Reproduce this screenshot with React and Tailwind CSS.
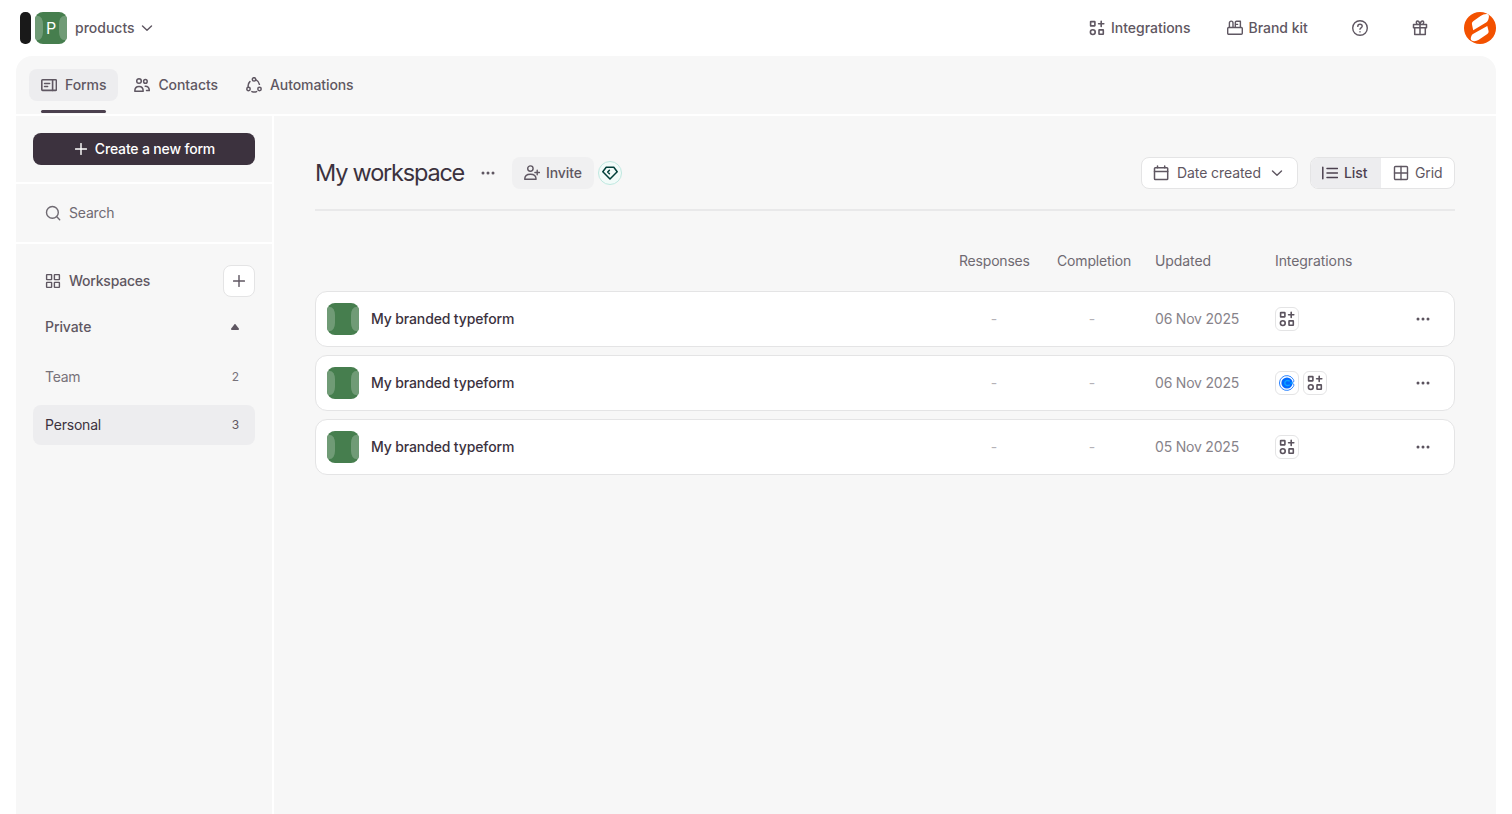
import React from 'react';

const Svg = ({ size = 16, className = '', sw = 1.4, children }) => (
  <svg
    width={size}
    height={size}
    viewBox="0 0 16 16"
    fill="none"
    stroke="currentColor"
    strokeWidth={sw}
    strokeLinecap="round"
    strokeLinejoin="round"
    className={`shrink-0 ${className}`}
  >
    {children}
  </svg>
);

const FormsIcon = () => (
  <Svg sw={1.6}>
    <rect x="0.8" y="2.8" width="14.6" height="10.6" rx="0.8" />
    <path d="M11.6 2.8v10.6M3.6 6.5h5M3.6 9.5h3" />
  </Svg>
);

const ContactsIcon = () => (
  <Svg sw={1.5}>
    <circle cx="5" cy="4" r="2.3" />
    <path d="M.8 14.2c0-3 1.7-4.6 4.2-4.6s4.2 1.6 4.2 4.6z" />
    <circle cx="11.4" cy="4.4" r="1.8" />
    <path d="M11.2 9.2c2.5-.2 4.1 1.5 4.1 4.4h-2.8" />
  </Svg>
);

const AutomationsIcon = () => (
  <Svg sw={1.5}>
    <circle cx="8" cy="2.4" r="1.7" />
    <circle cx="2.5" cy="12" r="1.7" />
    <circle cx="13.5" cy="12" r="1.7" />
    <path d="M10 2.8c1.8.9 3 2.5 3.4 4.5M3.9 4.6C2.5 5.9 1.9 7.7 2.2 9.9M5.9 14.6c1.7.7 3.2.7 4.7 0" />
  </Svg>
);

const AppsIcon = () => (
  <Svg sw={1.6}>
    <rect x="1.6" y="1.6" width="4.3" height="4.3" rx="0.3" />
    <path d="M12.2 1.2v5.2M9.6 3.8h5.2" />
    <circle cx="3.8" cy="12.1" r="2.4" />
    <rect x="10" y="9.9" width="4.3" height="4.3" rx="0.3" />
  </Svg>
);

const BrandKitIcon = () => (
  <Svg>
    <rect x="0.7" y="7.5" width="14.6" height="6.7" rx="1" />
    <path d="M2.400 7.300V3c0-1 .8-1.900 1.800-1.900S6 2 6 3v4.300M8.300 7.300V2.500c0-.8.5-1.300 1.300-1.300h3.800v6.100M8.600 4.400h2" />
  </Svg>
);

const HelpIcon = () => (
  <Svg>
    <circle cx="8" cy="8" r="7.3" />
    <path d="M5.8 6.4c0-1.3 1-2.1 2.2-2.1s2.2.8 2.2 2c0 1.5-2.2 1.6-2.2 3M8 11.8v.1" />
  </Svg>
);

const GiftIcon = () => (
  <Svg sw={1.5}>
    <path d="M1.5 4.6h13v3.2h-13zM2.7 7.8h10.6v6.6H2.7zM8 4.6v9.8M8 4.4C7.6 2 6.6 1 5.4 1c-1.4 0-1.5 2.5 0 3.400M8 4.400C8.400 2 9.400 1 10.600 1c1.400 0 1.500 2.500 0 3.400" />
  </Svg>
);

const ChevronIcon = () => (
  <Svg size={12} sw={1.9}>
    <path d="M2 5.200 8 11l6-5.800" />
  </Svg>
);

const PlusIcon = ({ size = 12 }) => (
  <Svg size={size} sw={1.9}>
    <path d="M8 .8v14.4M.8 8h14.4" />
  </Svg>
);

const SearchIcon = () => (
  <Svg>
    <circle cx="7.4" cy="7.4" r="5.9" />
    <path d="m11.800 11.800 2.900 2.900" />
  </Svg>
);

const WorkspacesIcon = () => (
  <Svg>
    <rect x="1.6" y="1.6" width="5" height="5" rx="0.4" />
    <rect x="9.4" y="1.6" width="5" height="5" rx="0.4" />
    <rect x="1.6" y="9.4" width="5" height="5" rx="0.4" />
    <rect x="9.4" y="9.4" width="5" height="5" rx="0.4" />
  </Svg>
);

const InviteIcon = () => (
  <Svg>
    <circle cx="6.4" cy="3.6" r="2.7" />
    <path d="M.7 14.3c0-3 2.200-5 5.700-5s5.700 2 5.700 5zM13.200 5.200v4.600M10.900 7.500h4.600" />
  </Svg>
);

const GemIcon = () => (
  <Svg sw={1.5} className="text-[#02403a]">
    <path d="M4.2 2.3h7.600L15.200 6.700 8 14 .8 6.700z" />
    <path d="M7.400 5.200 5.700 7l1.700 1.700" />
  </Svg>
);

const CalendarIcon = () => (
  <Svg sw={1.5}>
    <rect x="1.5" y="2.8" width="13.2" height="11.7" rx="0.8" />
    <path d="M1.5 6.5h13.2M4.5 1v1.7M11.7 1v1.7" />
  </Svg>
);

const ListIcon = () => (
  <Svg sw={1.5}>
    <path d="M.8 2.2v11.6M5 3.5h10.5M5 8h10.5M5 12.5h10.5" />
  </Svg>
);

const GridIcon = () => (
  <Svg>
    <rect x="1.5" y="1.5" width="13" height="13" rx="1" />
    <path d="M8 1.5v13M1.5 8h13" />
  </Svg>
);

const DotsIcon = () => (
  <svg width="14" height="4" viewBox="0 0 14 4" fill="currentColor" className="shrink-0">
    <circle cx="2" cy="2" r="1.5" />
    <circle cx="7" cy="2" r="1.5" />
    <circle cx="12" cy="2" r="1.5" />
  </svg>
);

const CalendlyIcon = () => (
  <svg width="16" height="16" viewBox="0 0 16 16" fill="none" className="shrink-0">
    <circle cx="8" cy="8" r="5.6" fill="#0069ff" />
    <path d="M14.2 4.2A7.400 7.400 0 1 0 14.200 11.800" stroke="#1677ff" strokeWidth="0.9" />
    <path d="M14.200 4.200c1 1.500.9 2.600-.7 3.800 1.600 1.200 1.700 2.300.7 3.800" stroke="#1677ff" strokeWidth="0.9" />
    <path d="M10.800 6.200C8.700 4.700 5.800 5.600 5.800 8s2.900 3.300 5 1.800" stroke="#0aa5ff" strokeWidth="1.400" />
    <path d="M11.500 8h2" stroke="#0ab4ff" strokeWidth="1.200" />
  </svg>
);

const BrandLogo = () => (
  <svg width="32" height="32" viewBox="0 0 32 32" className="shrink-0">
    <circle cx="16" cy="16" r="16" fill="#f35100" />
    <path
      d="M8 12.400c-.3-1.600.2-2.500 1.500-3.400l7-4.900c2.300-1.500 5-2.400 7.400-1.900 1.300.8 1.200 2.300.7 4.300-.4 1.700-1 3.200-2.500 4.100L9.200 18.200z"
      fill="#fff"
    />
    <path
      d="m23.300 14 1.200 4.800c.3 1.300 0 2.200-1.200 3.100l-8.500 5.900c-2.200 1.500-5.200 2-7.100.8-1.300-1-1.100-3-.2-4.900.4-.9 1-1.500 1.900-2z"
      fill="#fff"
    />
  </svg>
);

// green tile used for both the account and every form
const Tile = ({ children }) => (
  <div className="relative w-8 h-8 shrink-0 rounded-lg bg-[#467e4e] overflow-hidden flex items-center justify-center text-white">
    <span className="absolute left-0 top-1 w-2 h-6 rounded-r-[5px_8px] bg-[#709b76]" />
    <span className="absolute right-0 top-1 w-2 h-6 rounded-l-[5px_8px] bg-[#709b76]" />
    <span className="relative text-base leading-none">{children}</span>
  </div>
);

const IconChip = ({ children }) => (
  <span className="w-6 h-6 rounded-md border border-[#e4e4e5] bg-white flex items-center justify-center">
    {children}
  </span>
);

const tabs = [
  { label: 'Forms', icon: FormsIcon, active: true },
  { label: 'Contacts', icon: ContactsIcon },
  { label: 'Automations', icon: AutomationsIcon },
];

const forms = [
  { name: 'My branded typeform', updated: '06 Nov 2025', calendly: false },
  { name: 'My branded typeform', updated: '06 Nov 2025', calendly: true },
  { name: 'My branded typeform', updated: '05 Nov 2025', calendly: false },
];

const Header = () => (
  <header className="h-14 shrink-0 flex items-center justify-between pl-5 pr-4">
    <div className="flex items-center">
      <div className="w-[11px] h-8 rounded-[5px] bg-[#191919] mr-1" />
      <Tile>P</Tile>
      <span className="ml-2 mr-1.5 tracking-[0px] font-[450]">products</span>
      <ChevronIcon />
    </div>
    <div className="flex items-center font-[450]">
      <div className="flex items-center gap-1.5 w-[137.5px]">
        <AppsIcon />
        <span className="tracking-[-0.02px]">Integrations</span>
      </div>
      <div className="flex items-center gap-1.5 w-[125.5px]">
        <BrandKitIcon />
        <span className="tracking-[-0.02px]">Brand kit</span>
      </div>
      <div className="w-[60px] flex"><HelpIcon /></div>
      <div className="w-[52px] flex"><GiftIcon /></div>
      <BrandLogo />
    </div>
  </header>
);

const Sidebar = () => (
  <aside className="w-[258px] shrink-0 border-r-2 border-white">
    <div className="h-[68px] px-[17px] pt-[17px] border-b-2 border-white">
      <button className="w-[222px] h-8 pl-0.5 rounded-lg bg-[#3c323e] text-white font-[450] tracking-[-0.17px] flex items-center justify-center gap-2">
        <PlusIcon />
        Create a new form
      </button>
    </div>
    <div className="h-[60px] flex items-center gap-2 pl-[29px] border-b-2 border-white text-[#6f6a72]">
      <SearchIcon />
      <span className="tracking-[-0.2px]">Search</span>
    </div>
    <div className="pt-[21px] px-[17px] w-[256px]">
      <div className="h-8 flex items-center gap-2 pl-3 font-[450]">
        <WorkspacesIcon />
        <span className="tracking-[-0.22px]">Workspaces</span>
        <button className="ml-auto w-8 h-8 rounded-lg border border-[#e4e4e5] bg-white flex items-center justify-center">
          <PlusIcon />
        </button>
      </div>
      <div className="h-7 mt-4 pl-3 pr-4 flex items-center justify-between font-[450]">
        <span>Private</span>
        <svg width="8" height="6" viewBox="0 0 8 6" fill="currentColor">
          <path d="M3.3.4c.4-.4 1-.4 1.4 0l3.1 4c.5.7.2 1.500-.7 1.500H.9C0 5.900-.3 5.100.2 4.400z" />
        </svg>
      </div>
      <div className="h-10 mt-4 pl-3 pr-4 flex items-center justify-between text-[#77727a]">
        <span className="tracking-[-0.3px]">Team</span>
        <span className="text-xs">2</span>
      </div>
      <div className="h-10 mt-2 pl-3 pr-4 flex items-center justify-between rounded-lg bg-[#ededef]">
        <span className="text-[#3c323e] tracking-[-0.2px]">Personal</span>
        <span className="text-xs">3</span>
      </div>
    </div>
  </aside>
);

const FormRow = ({ form }) => (
  <div className="h-14 rounded-xl border border-[#e4e4e5] bg-white flex items-center pl-[11px] pr-6">
    <Tile />
    <span className="ml-3 font-[450] text-[#3c323e] tracking-[-0.13px]">{form.name}</span>
    <div className="ml-auto flex items-center text-[#87838a]">
      <span className="w-[70px] mr-7 text-center text-[#b5b2b7]">-</span>
      <span className="w-[70px] mr-7 text-center text-[#b5b2b7]">-</span>
      <span className="w-[120px] whitespace-nowrap tracking-[-0.2px]">{form.updated}</span>
      <div className="w-[141px] flex gap-1 text-[#5b535e]">
        {form.calendly && <IconChip><CalendlyIcon /></IconChip>}
        <IconChip><AppsIcon /></IconChip>
      </div>
      <span className="text-[#5b535e]"><DotsIcon /></span>
    </div>
  </div>
);

const Workspace = () => (
  <main className="flex-1 pl-[41px] pr-[41px]">
    <div className="h-[95px] pt-[21px] flex items-center border-b-2 border-[#e9e9ea]">
      <h1 className="w-[149px] whitespace-nowrap text-[23.5px] leading-8 text-[#3c323e] tracking-[-1.2px]">My workspace</h1>
      <span className="ml-[17px] mr-[17px]"><DotsIcon /></span>
      <button className="w-[82px] h-8 rounded-lg bg-[#f0f0f1] flex items-center justify-center gap-1.5 font-[450]">
        <InviteIcon />
        Invite
      </button>
      <span className="ml-1 w-6 h-6 rounded-full border border-[#bfe8e0] bg-[#f2fbf9] flex items-center justify-center">
        <GemIcon />
      </span>
      <button className="ml-auto w-[157px] h-8 rounded-lg border border-[#e4e4e5] bg-white flex items-center pl-[11px]">
        <CalendarIcon />
        <span className="w-[84px] ml-2 mr-[10px] text-left whitespace-nowrap">Date created</span>
        <ChevronIcon />
      </button>
      <div className="ml-3 w-[145px] h-8 rounded-lg border border-[#e4e4e5] bg-white flex overflow-hidden">
        <button className="w-[70px] h-full bg-[#ededef] flex items-center pl-[11px] gap-1.5 text-[#4c414f] font-[450]">
          <ListIcon />
          List
        </button>
        <button className="flex-1 flex items-center pl-3 gap-1.5">
          <GridIcon />
          Grid
        </button>
      </div>
    </div>
    <div className="h-20 pt-5 flex items-center justify-end text-[#6f6a72]">
      <span className="w-[98px] tracking-[-0.2px]">Responses</span>
      <span className="w-[98px] tracking-[-0.15px]">Completion</span>
      <span className="w-[120px]">Updated</span>
      <span className="w-[180px]">Integrations</span>
    </div>
    <div className="flex flex-col gap-2">
      {forms.map((form, i) => <FormRow key={i} form={form} />)}
    </div>
  </main>
);

const App = () => (
  <div className="h-[814px] bg-white flex flex-col overflow-hidden font-['Inter',sans-serif] text-sm tracking-[-0.08px] text-[#5f5762]">
    <Header />
    <div className="mx-4 flex-1 rounded-t-2xl bg-[#f7f7f7] flex flex-col">
      <nav className="h-[60px] shrink-0 flex items-start gap-1 pl-[13px] pt-[13px] border-b-2 border-white">
        {tabs.map(({ label, icon: Icon, active }) => (
          <div key={label} className="flex flex-col">
            <div className={`h-8 px-3 rounded-lg flex items-center gap-2 font-[450] ${active ? 'bg-[#ededef]' : ''}`}>
              <Icon />
              <span>{label}</span>
            </div>
            {active && <div className="mx-3 mt-[9px] h-[3px] rounded-full bg-[#4c414f]" />}
          </div>
        ))}
      </nav>
      <div className="flex-1 flex">
        <Sidebar />
        <Workspace />
      </div>
    </div>
  </div>
);

export default App;
